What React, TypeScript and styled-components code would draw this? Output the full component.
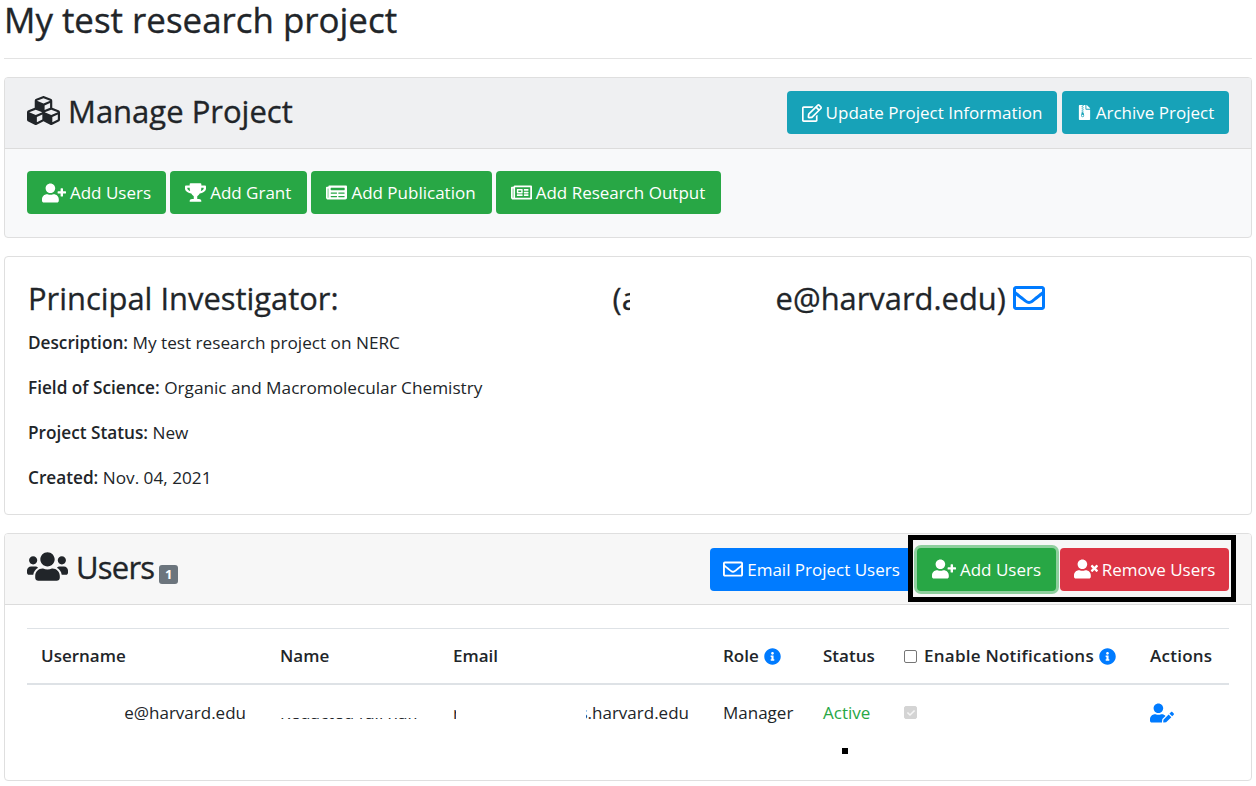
import React from "react";
import styled, { createGlobalStyle } from "styled-components";
import {
  FaCubes, FaUserPlus, FaTrophy, FaNewspaper, FaRegEdit, FaFileArchive, FaRegEnvelope,
  FaUsers, FaInfoCircle, FaUserEdit, FaUserTimes, FaRegNewspaper, FaCheck,
} from "react-icons/fa";

const Global = createGlobalStyle`
  html, body { margin: 0; background: #fff; }
  body { font-family: "Open Sans", "Noto Sans", sans-serif; color: #212529; font-size: 17px; line-height: 1.5; overflow: hidden; }
  * { box-sizing: border-box; }
`;

const Page = styled.div`
  position: relative;
  padding: 0 4px;
  height: 786px;
`;
const Title = styled.h2`
  margin: 0 0 18px;
  border-bottom: 1px solid #e3e3e3;
  height: 59px;
  font-size: 34.9px;
  line-height: 39px;
  font-weight: 500;
  -webkit-text-stroke: 0.35px #212529;
`;
const Card = styled.section<{ $muted?: boolean }>`
  border: 1px solid #dfdfdf;
  border-radius: 4px;
  background: ${(p) => (p.$muted ? "#f8f9fa" : "#fff")};
  margin-bottom: 18px;
  overflow: hidden;
`;
const CardHeader = styled.header<{ $tone: string }>`
  height: 71px;
  display: flex;
  align-items: center;
  justify-content: space-between;
  padding: 0 22px;
  background: ${(p) => p.$tone};
  border-bottom: 1px solid #dcdcdc;
`;
const Heading = styled.h3`
  margin: 0;
  padding-bottom: 5px;
  font-size: 31px;
  line-height: 36px;
  font-weight: 500;
  -webkit-text-stroke: 0.35px #212529;
  display: flex;
  align-items: center;
  gap: 8px;
`;
const TightWord = styled.span`
  letter-spacing: -0.8px;
`;
const Badge = styled.span`
  background: #6c757d;
  color: #fff;
  font-size: 13px;
  font-weight: 700;
  line-height: 19px;
  width: 19px;
  height: 19px;
  border-radius: 3px;
  text-align: center;
  align-self: flex-end;
  -webkit-text-stroke: 0;
  margin: 0 0 3px -3px;
`;
const ButtonRow = styled.div<{ $gap: number; $lift?: boolean }>`
  display: flex;
  gap: ${(p) => p.$gap}px;
  margin-bottom: ${(p) => (p.$lift ? "1px" : "0")};
`;
const Button = styled.button<{ $bg: string; $w: number; $focus?: boolean; $flatRight?: boolean }>`
  height: 43px;
  width: ${(p) => p.$w}px;
  padding: 0;
  border: 0;
  border-radius: ${(p) => (p.$flatRight ? "4px 0 0 4px" : "4px")};
  background: ${(p) => p.$bg};
  color: #fff;
  font-family: inherit;
  font-size: 17px;
  display: inline-flex;
  align-items: center;
  justify-content: center;
  gap: 4px;
  white-space: nowrap;
  box-shadow: ${(p) => (p.$focus ? "0 0 0 3px rgba(40,167,69,.5)" : "none")};
  svg { flex: none; }
`;
const ManageBody = styled.div`
  padding: 22px 22px 23px;
`;
const InfoCard = styled.div`
  padding: 20px 23px 0;
  height: 257px;
`;
const PiLine = styled.h4`
  margin: 0 0 12px;
  font-size: 30.9px;
  line-height: 42px;
  font-weight: 500;
  -webkit-text-stroke: 0.3px #212529;
  height: 42px;
  display: flex;
  align-items: center;
  white-space: nowrap;
`;
const PiGap = styled.span<{ $w: number }>`
  display: inline-block;
  flex: none;
  width: ${(p) => p.$w}px;
`;
const PiClipped = styled.span`
  display: inline-block;
  flex: none;
  width: 17px;
  overflow: hidden;
`;
const EnvelopeLink = styled.span`
  color: #007bff;
  display: inline-flex;
  margin-left: 7px;
`;
const Fact = styled.p`
  margin: 0 0 21px;
  line-height: 24px;
  font-size: 17.2px;
  b { font-weight: 600; }
`;
const TableWrap = styled.div`
  padding: 23px 22px 0;
  height: 175px;
`;
const Grid = styled.div`
  display: grid;
  grid-template-columns: 239px 173px 270px 100px 81px 246px 1fr;
  border-top: 1px solid #dee2e6;
`;
const Th = styled.div`
  height: 56px;
  border-bottom: 2px solid #dee2e6;
  padding-left: 14px;
  display: flex;
  align-items: center;
  gap: 5px;
  font-size: 17px;
  font-weight: 600;
  white-space: nowrap;
`;
const WideLabel = styled.span`
  letter-spacing: 0.25px;
`;
const Td = styled.div<{ $right?: boolean; $green?: boolean }>`
  height: 57px;
  padding: 0 ${(p) => (p.$right ? "20px" : "0")} 2px 14px;
  display: flex;
  align-items: center;
  justify-content: ${(p) => (p.$right ? "flex-end" : "flex-start")};
  font-size: 17px;
  white-space: nowrap;
  color: ${(p) => (p.$green ? "#28a745" : "inherit")};
`;
const InfoIcon = styled(FaInfoCircle)`
  color: #007bff;
`;
const CheckBox = styled.span<{ $checked?: boolean }>`
  width: 13px;
  height: 13px;
  margin-right: 2px;
  border-radius: 2px;
  border: 1px solid ${(p) => (p.$checked ? "#d4d4d4" : "#767676")};
  background: ${(p) => (p.$checked ? "#d4d4d4" : "#fff")};
  display: inline-flex;
  align-items: center;
  justify-content: center;
  color: #f5f5f5;
  flex: none;
`;
const SliverName = styled.span`
  display: block;
  width: 139px;
  height: 1px;
  margin-top: 11px;
  overflow: hidden;
  position: relative;
`;
const SliverText = styled.span`
  position: absolute;
  left: 0;
  bottom: -4px;
  font-size: 17px;
  line-height: 20px;
  white-space: nowrap;
`;
const EmailCell = styled.span`
  display: flex;
  align-items: center;
  width: 100%;
`;
const EmailHead = styled.span`
  display: inline-block;
  width: 3px;
  overflow: hidden;
`;
const EmailTail = styled.span`
  margin-left: 130px;
  width: 103px;
  overflow: hidden;
  display: flex;
  justify-content: flex-end;
`;
const Frame = styled.div`
  position: absolute;
  left: 908px;
  top: 535px;
  width: 328px;
  height: 67px;
  border: 5px solid #000;
`;
const Speck = styled.div`
  position: absolute;
  left: 842px;
  top: 748px;
  width: 6px;
  height: 6px;
  background: #000;
`;

export default function App() {
  return (
    <Page>
      <Global />
      <Title>My test research project</Title>
      <Card $muted>
        <CardHeader $tone="#eff0f2">
          <Heading><FaCubes size={33} />Manage Project</Heading>
          <ButtonRow $gap={5} $lift>
            <Button $bg="#17a2b8" $w={270}><FaRegEdit size={20} />Update Project Information</Button>
            <Button $bg="#17a2b8" $w={167}><FaFileArchive size={15} />Archive Project</Button>
          </ButtonRow>
        </CardHeader>
        <ManageBody>
          <ButtonRow $gap={4}>
            <Button $bg="#28a745" $w={139}><FaUserPlus size={24} />Add Users</Button>
            <Button $bg="#28a745" $w={136.5}><FaTrophy size={21} />Add Grant</Button>
            <Button $bg="#28a745" $w={181}><FaNewspaper size={21} />Add Publication</Button>
            <Button $bg="#28a745" $w={225}><FaRegNewspaper size={21} />Add Research Output</Button>
          </ButtonRow>
        </ManageBody>
      </Card>
      <Card>
        <InfoCard>
          <PiLine>
            Principal Investigator:<PiGap $w={274} />
            <PiClipped>(a</PiClipped>
            <PiGap $w={146} />e@harvard.edu)
            <EnvelopeLink><FaRegEnvelope size={32} /></EnvelopeLink>
          </PiLine>
          <Fact><b>Description:</b> My test research project on NERC</Fact>
          <Fact><b>Field of Science:</b> Organic and Macromolecular Chemistry</Fact>
          <Fact><b>Project Status:</b> New</Fact>
          <Fact><b>Created:</b> Nov. 04, 2021</Fact>
        </InfoCard>
      </Card>
      <Card>
        <CardHeader $tone="#f7f7f7">
          <Heading><FaUsers size={41} /><TightWord>Users</TightWord><Badge>1</Badge></Heading>
          <ButtonRow $gap={4}>
            <Button $bg="#007bff" $w={203} $flatRight><FaRegEnvelope size={20} />Email Project Users</Button>
            <Button $bg="#28a745" $w={139} $focus><FaUserPlus size={24} />Add Users</Button>
            <Button $bg="#dc3545" $w={169}><FaUserTimes size={24} />Remove Users</Button>
          </ButtonRow>
        </CardHeader>
        <TableWrap>
          <Grid>
            <Th>Username</Th>
            <Th>Name</Th>
            <Th>Email</Th>
            <Th>Role <InfoIcon size={17} /></Th>
            <Th>Status</Th>
            <Th><CheckBox /><WideLabel>Enable Notifications</WideLabel> <InfoIcon size={17} /></Th>
            <Th><WideLabel>Actions</WideLabel></Th>
            <Td $right>e@harvard.edu</Td>
            <Td><SliverName><SliverText>Redacted full name</SliverText></SliverName></Td>
            <Td><EmailCell><EmailHead>r</EmailHead><EmailTail>s.harvard.edu</EmailTail></EmailCell></Td>
            <Td>Manager</Td>
            <Td $green>Active</Td>
            <Td><CheckBox $checked><FaCheck size={8} /></CheckBox></Td>
            <Td><FaUserEdit size={24} color="#007bff" /></Td>
          </Grid>
        </TableWrap>
      </Card>
      <Frame />
      <Speck />
    </Page>
  );
}
